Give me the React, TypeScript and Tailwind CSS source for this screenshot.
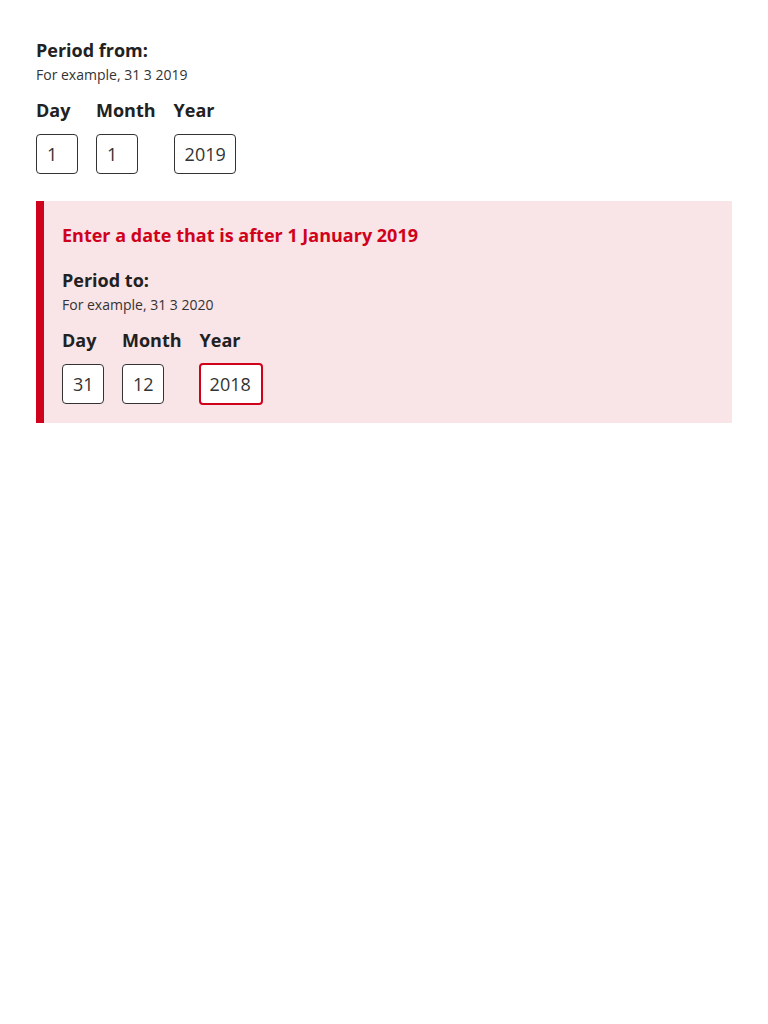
import React from "react";

function DateInputs({
  day,
  month,
  year,
  yearError,
}: {
  day: string;
  month: string;
  year: string;
  yearError?: boolean;
}) {
  const fields = [
    { label: "Day", value: day, wide: false, error: false },
    { label: "Month", value: month, wide: false, error: false },
    { label: "Year", value: year, wide: true, error: !!yearError },
  ];
  return (
    <div className="mt-[13px] flex gap-[18px]">
      {fields.map((f) => (
        <div key={f.label} className="flex flex-col">
          <label className="text-[18px] font-bold leading-[25px] text-[#212121]">{f.label}</label>
          {f.error ? (
            <input
              readOnly
              value={f.value}
              className="-ml-[1px] mt-[10px] h-[42px] w-[64px] rounded-[4px] border-2 border-[#d0021b] bg-white px-[9px] text-[18px] text-[#333] outline-none"
            />
          ) : (
            <input
              readOnly
              value={f.value}
              className={`mt-[11px] h-[40px] ${f.wide ? "w-[62px]" : "w-[42px]"} rounded-[4px] border border-[#333] bg-white px-[10px] text-[18px] text-[#333] outline-none`}
            />
          )}
        </div>
      ))}
    </div>
  );
}

export default function App() {
  return (
    <div
      className="min-h-[1024px] bg-white px-[36px] pt-[38px]"
      style={{ fontFamily: '"Open Sans", "Noto Sans", sans-serif' }}
    >
      <fieldset>
        <legend className="text-[18px] font-bold leading-[25px] text-[#212121]">Period from:</legend>
        <p className="mt-[2px] text-[14px] leading-[20px] text-[#333]">For example, 31 3 2019</p>
        <DateInputs day="1" month="1" year="2019" />
      </fieldset>

      <div className="mt-[27px] border-l-[8px] border-[#d0021b] bg-[#f9e4e7] pb-[18px] pl-[18px] pt-[22px]">
        <p className="text-[18px] font-bold leading-[25px] text-[#d0021b]">
          Enter a date that is after 1 January 2019
        </p>
        <fieldset className="mt-[20px]">
          <legend className="text-[18px] font-bold leading-[25px] text-[#212121]">Period to:</legend>
          <p className="mt-[2px] text-[14px] leading-[20px] text-[#333]">For example, 31 3 2020</p>
          <DateInputs day="31" month="12" year="2018" yearError />
        </fieldset>
      </div>
    </div>
  );
}
